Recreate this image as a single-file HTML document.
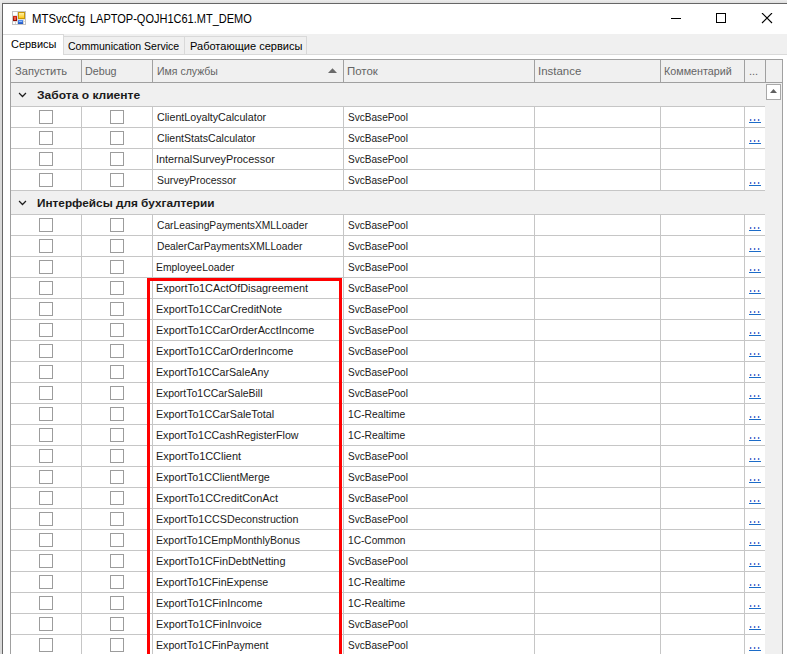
<!DOCTYPE html>
<html lang="ru"><head><meta charset="utf-8"><title>MTSvcCfg</title>
<style>
html,body{margin:0;padding:0}
body{width:787px;height:654px;overflow:hidden;position:relative;background:#fff;font-family:"Liberation Sans",sans-serif;font-size:11px;color:#1a1a1a}
div,span,i,b,svg{position:absolute;box-sizing:border-box}
.sh-t{left:0;top:0;width:787px;height:3px;background:linear-gradient(#ececec,#dedede)}
.sh-l{left:0;top:0;width:2px;height:654px;background:linear-gradient(#ececec 0,#e2e2e2 12px,#d9d9d9 40px)}
.bt{left:2px;top:3px;width:785px;height:1px;background:#666}
.bl{left:2px;top:3px;width:1px;height:651px;background:#666}
.title{left:33px;top:12px;width:300px;height:16px;font-size:12px;line-height:14px;color:#000}
.strip{left:3px;top:34px;width:784px;height:21px;background:#f0f0f0;border-bottom:1px solid #dadada}
.tab{top:36px;height:19px;background:#f0f0f0;border:1px solid #d9d9d9;border-left:none;line-height:19px;white-space:nowrap;font-size:11px;color:#000}
.tab.sel{top:34px;height:21px;left:3px;width:61px;background:#fff;border:1px solid #d9d9d9;border-bottom:none;border-left:none;line-height:19px}

.grid{left:10px;top:59px;width:773px;height:600px;border:1px solid #a0a0a0;background:#f0f0f0}
.hd{left:11px;top:60px;width:771px;height:23px;background:#f0f0f0;border-bottom:1px solid #a0a0a0}
.hc{top:60px;height:22px;border-right:1px solid #a0a0a0;line-height:23px;color:#646464;white-space:nowrap}
.hc span{left:4px;top:0}
.grp{left:11px;width:754px;height:24px;background:#f0f0f0;border-bottom:1px solid #c6c6c6}
.chev{left:8px;top:10px;overflow:visible}
.gt{line-height:25px;font-weight:bold;color:#1a1a1a;white-space:nowrap}
.row{left:11px;width:754px;height:21px;background:#fff;border-bottom:1px solid #c6c6c6}
.row span{top:0;line-height:20px;white-space:nowrap}
.cb{width:14px;height:14px;border:1px solid #9c9c9c;background:#fff;top:3px}
.c1{left:28px}.c2{left:99px}

.lk{left:738px;top:0;width:12px;height:16px;border-bottom:1px solid #1c6cc8;color:#1c5cc8;overflow:visible}
.lk b{font-weight:normal;color:#1448c0;left:0px;top:2px;line-height:18px;letter-spacing:0.94px;transform:scaleY(1.6);transform-origin:0 14px;white-space:nowrap}
.vl{top:107px;width:1px;background:#c6c6c6}
.red{left:147px;top:278px;width:195px;height:400px;border:3px solid #f00}
.sbtn{left:766px;top:84px;width:15px;height:16px;border:1px solid #a8a8a8;background:#fff}

.t{top:0;transform-origin:0 0;white-space:nowrap}

</style></head>
<body>
<div class="sh-t"></div><div class="sh-l"></div><div class="bt"></div><div class="bl"></div>
<svg style="left:12px;top:11px" width="14" height="14" viewBox="0 0 14 14" shape-rendering="crispEdges">
<defs>
<linearGradient id="gy" x1="0" y1="0" x2="0" y2="1"><stop offset="0" stop-color="#fff2a8"/><stop offset="1" stop-color="#ffc818"/></linearGradient>
<linearGradient id="gr" x1="0" y1="0" x2="0" y2="1"><stop offset="0" stop-color="#d82c14"/><stop offset="1" stop-color="#8c0800"/></linearGradient>
<linearGradient id="gb" x1="0" y1="0" x2="0" y2="1"><stop offset="0" stop-color="#5c98f0"/><stop offset="1" stop-color="#1c50c0"/></linearGradient>
</defs>
<rect x="0" y="0" width="14" height="14" fill="#c4c4c4"/>
<rect x="1" y="1" width="12" height="12" fill="#fff"/>
<rect x="1" y="4" width="5" height="1" fill="#dfe6e8"/><rect x="5" y="1" width="1" height="12" fill="#d4d8dc"/>
<rect x="1" y="10" width="12" height="1" fill="#d8d8d8"/><rect x="3" y="11" width="1" height="2" fill="#d0d0d0"/><rect x="11" y="9" width="1" height="4" fill="#d8d4cc"/>
<rect x="6" y="8" width="7" height="1" fill="#e4e0d4"/>
<rect x="6" y="1" width="7" height="7" fill="#c89808"/><rect x="7" y="2" width="5" height="5" fill="url(#gy)"/>
<rect x="1" y="5" width="4" height="5" fill="url(#gr)"/><rect x="2" y="6" width="2" height="3" fill="#ec5c48"/>
<rect x="6" y="9" width="5" height="4" fill="url(#gb)"/><rect x="7" y="10" width="3" height="1" fill="#8cb8ff"/>
</svg>
<div class="title"><span class="t" style="left:-0.80px;transform:scaleX(0.9454)">MTSvcCfg</span> <span class="t" style="left:56.60px;transform:scaleX(0.9166)">LAPTOP-QOJH1C61.MT_DEMO</span></div>
<svg style="left:671px;top:13px" width="102" height="11" viewBox="0 0 102 11">
<rect x="0" y="5" width="10" height="1" fill="#000"/>
<rect x="45.5" y="0.5" width="9" height="9" fill="none" stroke="#000"/>
<path d="M91 0 L101 10 M101 0 L91 10" stroke="#000" stroke-width="1.1" fill="none"/>
</svg>
<div class="strip"></div>
<div class="tab sel"><span class="t" style="left:8.30px;transform:scaleX(0.9956)">Сервисы</span></div>
<div class="tab" style="left:64px;width:121px"><span class="t" style="left:3.60px;transform:scaleX(0.9575)">Communication Service</span></div>
<div class="tab" style="left:185px;width:122px"><span class="t" style="left:5.00px;transform:scaleX(1.0038)">Работающие сервисы</span></div>
<div class="grid"></div>
<div class="hd"></div>
<div class="hc" style="left:11px;width:71px"><span class="t" style="left:4.00px;transform:scaleX(1.0120)">Запустить</span></div>
<div class="hc" style="left:82px;width:71px"><span class="t" style="left:3.00px;transform:scaleX(0.9742)">Debug</span></div>
<div class="hc" style="left:153px;width:191px"><span class="t" style="left:3.90px;transform:scaleX(0.9551)">Имя службы</span><svg style="left:175px;top:8px" width="9" height="5" viewBox="0 0 9 5"><path d="M0 5 L4.5 0.3 L9 5 Z" fill="#6a6a6a"/></svg></div>
<div class="hc" style="left:344px;width:191px"><span class="t" style="left:2.80px;transform:scaleX(1.0414)">Поток</span></div>
<div class="hc" style="left:535px;width:126px"><span class="t" style="left:2.90px;transform:scaleX(1.0400)">Instance</span></div>
<div class="hc" style="left:661px;width:84px"><span class="t" style="left:2.80px;transform:scaleX(0.9779)">Комментарий</span></div>
<div class="hc" style="left:745px;width:21px"><span>...</span></div>
<div class="grp" style="top:83px"><svg class="chev" width="7" height="5" viewBox="0 0 7 5"><path d="M0.5 0.5 L3.5 3.5 L6.5 0.5" fill="none" stroke="#1e1e1e" stroke-width="1.25" stroke-linecap="square"/></svg><span class="gt t" style="left:26.10px;transform:scaleX(1.0947)">Забота о клиенте</span></div>
<div class="row" style="top:107px"><i class="cb c1"></i><i class="cb c2"></i><span class="t" style="left:146.00px;transform:scaleX(0.9699)">ClientLoyaltyCalculator</span><span class="t" style="left:336.60px;transform:scaleX(0.9154)">SvcBasePool</span><span class="lk"><b>...</b></span></div>
<div class="row" style="top:128px"><i class="cb c1"></i><i class="cb c2"></i><span class="t" style="left:146.00px;transform:scaleX(0.9602)">ClientStatsCalculator</span><span class="t" style="left:336.60px;transform:scaleX(0.9154)">SvcBasePool</span><span class="lk"><b>...</b></span></div>
<div class="row" style="top:149px"><i class="cb c1"></i><i class="cb c2"></i><span class="t" style="left:145.00px;transform:scaleX(0.9867)">InternalSurveyProcessor</span><span class="t" style="left:336.60px;transform:scaleX(0.9154)">SvcBasePool</span></div>
<div class="row" style="top:170px"><i class="cb c1"></i><i class="cb c2"></i><span class="t" style="left:146.00px;transform:scaleX(0.9452)">SurveyProcessor</span><span class="t" style="left:336.60px;transform:scaleX(0.9154)">SvcBasePool</span><span class="lk"><b>...</b></span></div>
<div class="grp" style="top:191px"><svg class="chev" width="7" height="5" viewBox="0 0 7 5"><path d="M0.5 0.5 L3.5 3.5 L6.5 0.5" fill="none" stroke="#1e1e1e" stroke-width="1.25" stroke-linecap="square"/></svg><span class="gt t" style="left:26.40px;transform:scaleX(1.0715)">Интерфейсы для бухгалтерии</span></div>
<div class="row" style="top:215px"><i class="cb c1"></i><i class="cb c2"></i><span class="t" style="left:146.00px;transform:scaleX(0.9309)">CarLeasingPaymentsXMLLoader</span><span class="t" style="left:336.60px;transform:scaleX(0.9154)">SvcBasePool</span><span class="lk"><b>...</b></span></div>
<div class="row" style="top:236px"><i class="cb c1"></i><i class="cb c2"></i><span class="t" style="left:146.00px;transform:scaleX(0.9321)">DealerCarPaymentsXMLLoader</span><span class="t" style="left:336.60px;transform:scaleX(0.9154)">SvcBasePool</span><span class="lk"><b>...</b></span></div>
<div class="row" style="top:257px"><i class="cb c1"></i><i class="cb c2"></i><span class="t" style="left:145.00px;transform:scaleX(0.9434)">EmployeeLoader</span><span class="t" style="left:336.60px;transform:scaleX(0.9154)">SvcBasePool</span><span class="lk"><b>...</b></span></div>
<div class="row" style="top:278px"><i class="cb c1"></i><i class="cb c2"></i><span class="t" style="left:145.00px;transform:scaleX(0.9910)">ExportTo1CActOfDisagreement</span><span class="t" style="left:336.60px;transform:scaleX(0.9154)">SvcBasePool</span><span class="lk"><b>...</b></span></div>
<div class="row" style="top:299px"><i class="cb c1"></i><i class="cb c2"></i><span class="t" style="left:145.00px;transform:scaleX(0.9860)">ExportTo1CCarCreditNote</span><span class="t" style="left:336.60px;transform:scaleX(0.9154)">SvcBasePool</span><span class="lk"><b>...</b></span></div>
<div class="row" style="top:320px"><i class="cb c1"></i><i class="cb c2"></i><span class="t" style="left:145.00px;transform:scaleX(0.9839)">ExportTo1CCarOrderAcctIncome</span><span class="t" style="left:336.60px;transform:scaleX(0.9154)">SvcBasePool</span><span class="lk"><b>...</b></span></div>
<div class="row" style="top:341px"><i class="cb c1"></i><i class="cb c2"></i><span class="t" style="left:145.00px;transform:scaleX(0.9856)">ExportTo1CCarOrderIncome</span><span class="t" style="left:336.60px;transform:scaleX(0.9154)">SvcBasePool</span><span class="lk"><b>...</b></span></div>
<div class="row" style="top:362px"><i class="cb c1"></i><i class="cb c2"></i><span class="t" style="left:145.00px;transform:scaleX(0.9708)">ExportTo1CCarSaleAny</span><span class="t" style="left:336.60px;transform:scaleX(0.9154)">SvcBasePool</span><span class="lk"><b>...</b></span></div>
<div class="row" style="top:383px"><i class="cb c1"></i><i class="cb c2"></i><span class="t" style="left:145.00px;transform:scaleX(0.9520)">ExportTo1CCarSaleBill</span><span class="t" style="left:336.60px;transform:scaleX(0.9154)">SvcBasePool</span><span class="lk"><b>...</b></span></div>
<div class="row" style="top:404px"><i class="cb c1"></i><i class="cb c2"></i><span class="t" style="left:145.00px;transform:scaleX(0.9801)">ExportTo1CCarSaleTotal</span><span class="t" style="left:336.90px;transform:scaleX(0.9367)">1C-Realtime</span><span class="lk"><b>...</b></span></div>
<div class="row" style="top:425px"><i class="cb c1"></i><i class="cb c2"></i><span class="t" style="left:145.00px;transform:scaleX(0.9676)">ExportTo1CCashRegisterFlow</span><span class="t" style="left:336.90px;transform:scaleX(0.9367)">1C-Realtime</span><span class="lk"><b>...</b></span></div>
<div class="row" style="top:446px"><i class="cb c1"></i><i class="cb c2"></i><span class="t" style="left:145.00px;transform:scaleX(0.9935)">ExportTo1CClient</span><span class="t" style="left:336.60px;transform:scaleX(0.9154)">SvcBasePool</span><span class="lk"><b>...</b></span></div>
<div class="row" style="top:467px"><i class="cb c1"></i><i class="cb c2"></i><span class="t" style="left:145.00px;transform:scaleX(0.9746)">ExportTo1CClientMerge</span><span class="t" style="left:336.60px;transform:scaleX(0.9154)">SvcBasePool</span><span class="lk"><b>...</b></span></div>
<div class="row" style="top:488px"><i class="cb c1"></i><i class="cb c2"></i><span class="t" style="left:145.00px;transform:scaleX(0.9928)">ExportTo1CCreditConAct</span><span class="t" style="left:336.60px;transform:scaleX(0.9154)">SvcBasePool</span><span class="lk"><b>...</b></span></div>
<div class="row" style="top:509px"><i class="cb c1"></i><i class="cb c2"></i><span class="t" style="left:145.00px;transform:scaleX(0.9754)">ExportTo1CCSDeconstruction</span><span class="t" style="left:336.60px;transform:scaleX(0.9154)">SvcBasePool</span><span class="lk"><b>...</b></span></div>
<div class="row" style="top:530px"><i class="cb c1"></i><i class="cb c2"></i><span class="t" style="left:145.00px;transform:scaleX(0.9614)">ExportTo1CEmpMonthlyBonus</span><span class="t" style="left:336.90px;transform:scaleX(0.9213)">1C-Common</span><span class="lk"><b>...</b></span></div>
<div class="row" style="top:551px"><i class="cb c1"></i><i class="cb c2"></i><span class="t" style="left:145.00px;transform:scaleX(0.9894)">ExportTo1CFinDebtNetting</span><span class="t" style="left:336.60px;transform:scaleX(0.9154)">SvcBasePool</span><span class="lk"><b>...</b></span></div>
<div class="row" style="top:572px"><i class="cb c1"></i><i class="cb c2"></i><span class="t" style="left:145.00px;transform:scaleX(0.9705)">ExportTo1CFinExpense</span><span class="t" style="left:336.90px;transform:scaleX(0.9367)">1C-Realtime</span><span class="lk"><b>...</b></span></div>
<div class="row" style="top:593px"><i class="cb c1"></i><i class="cb c2"></i><span class="t" style="left:145.00px;transform:scaleX(0.9782)">ExportTo1CFinIncome</span><span class="t" style="left:336.90px;transform:scaleX(0.9367)">1C-Realtime</span><span class="lk"><b>...</b></span></div>
<div class="row" style="top:614px"><i class="cb c1"></i><i class="cb c2"></i><span class="t" style="left:145.00px;transform:scaleX(0.9841)">ExportTo1CFinInvoice</span><span class="t" style="left:336.60px;transform:scaleX(0.9154)">SvcBasePool</span><span class="lk"><b>...</b></span></div>
<div class="row" style="top:635px"><i class="cb c1"></i><i class="cb c2"></i><span class="t" style="left:145.00px;transform:scaleX(0.9681)">ExportTo1CFinPayment</span><span class="t" style="left:336.60px;transform:scaleX(0.9154)">SvcBasePool</span><span class="lk"><b>...</b></span></div>
<div class="vl" style="left:81px;height:84px"></div><div class="vl" style="left:152px;height:84px"></div><div class="vl" style="left:343px;height:84px"></div><div class="vl" style="left:534px;height:84px"></div><div class="vl" style="left:660px;height:84px"></div><div class="vl" style="left:744px;height:84px"></div>
<div class="vl" style="left:81px;top:215px;height:440px"></div><div class="vl" style="left:152px;top:215px;height:440px"></div><div class="vl" style="left:343px;top:215px;height:440px"></div><div class="vl" style="left:534px;top:215px;height:440px"></div><div class="vl" style="left:660px;top:215px;height:440px"></div><div class="vl" style="left:744px;top:215px;height:440px"></div>
<div class="sbtn"><svg style="left:3px;top:4px" width="7" height="4" viewBox="0 0 7 4"><path d="M0 4 L3.5 0 L7 4 Z" fill="#606060"/></svg></div>
<div class="red"></div>
</body></html>
